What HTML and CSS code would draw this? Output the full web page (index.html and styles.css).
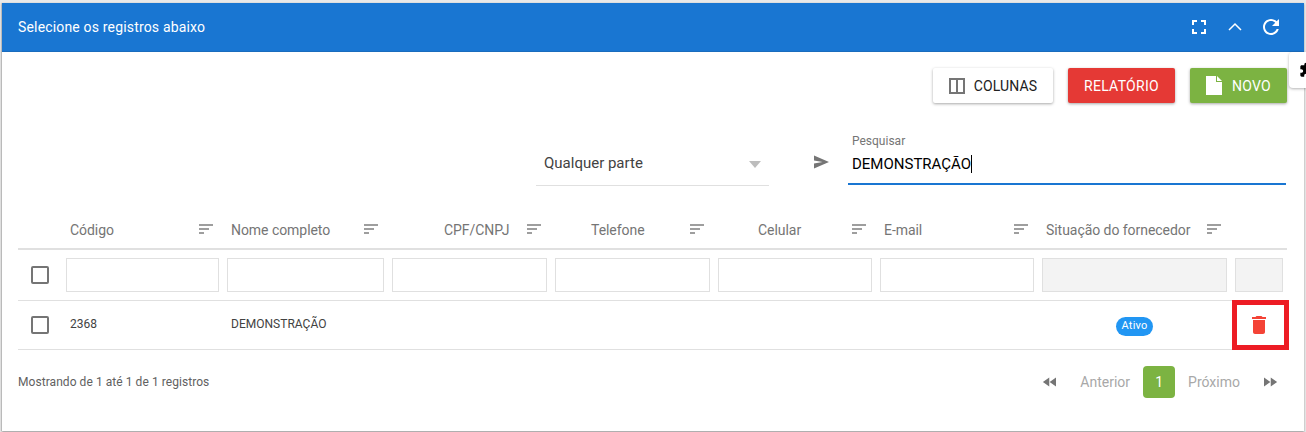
FILE: index.html
```html
<!DOCTYPE html>
<html lang="pt-BR">
<head>
<meta charset="utf-8">
<title>Selecione os registros</title>
<link rel="stylesheet" href="styles.css">
</head>
<body>
<main class="card">
  <header class="card-head">
    <h1 class="card-title">Selecione os registros abaixo</h1>
    <div class="head-tools">
      <svg class="tool tool-full" viewBox="0 0 24 24"><path d="M7 14H5v5h5v-2H7v-3zm-2-4h2V7h3V5H5v5zm12 7h-3v2h5v-5h-2v3zM14 5v2h3v3h2V5h-5z"/></svg>
      <svg class="tool tool-up" viewBox="0 0 24 24"><path d="M6 15l6-6 6 6" fill="none" stroke="#fff" stroke-width="1.5"/></svg>
      <svg class="tool tool-reload" viewBox="0 0 24 24"><path d="M17.65 6.35C16.2 4.9 14.21 4 12 4c-4.42 0-7.99 3.58-7.99 8s3.57 8 7.99 8c3.73 0 6.84-2.55 7.73-6h-2.08c-.82 2.33-3.04 4-5.65 4-3.31 0-6-2.69-6-6s2.69-6 6-6c1.66 0 3.14.69 4.22 1.78L13 11h7V4l-2.35 2.35z"/></svg>
    </div>
  </header>

  <div class="side-tab">
    <svg class="side-icon" viewBox="0 0 24 24"><path d="M20.5 11H19V7c0-1.1-.9-2-2-2h-4V3.5C13 2.12 11.88 1 10.5 1S8 2.12 8 3.5V5H4c-1.1 0-1.99.9-1.99 2v3.8H3.5c1.49 0 2.7 1.21 2.7 2.7s-1.21 2.7-2.7 2.7H2V20c0 1.1.9 2 2 2h3.8v-1.5c0-1.49 1.21-2.7 2.7-2.7 1.49 0 2.7 1.21 2.7 2.7V22H17c1.1 0 2-.9 2-2v-4h1.5c1.38 0 2.5-1.12 2.5-2.5S21.88 11 20.5 11z"/></svg>
  </div>

  <div class="card-body">
    <div class="actions">
      <button class="btn btn-light">
        <svg class="btn-columns" viewBox="0 0 16 16"><path d="M1 1h14v14H1zM8 1v14" fill="none" stroke="#757575" stroke-width="2"/></svg>
        COLUNAS
      </button>
      <button class="btn btn-red">RELATÓRIO</button>
      <button class="btn btn-green">
        <svg class="btn-file" viewBox="0 0 16 19"><path d="M0 0h10v6h6v13H0z"/><path d="M11 0l5 5h-5z"/></svg>
        NOVO
      </button>
    </div>

    <div class="search-row">
      <div class="select">
        <span>Qualquer parte</span>
        <span class="select-arrow"></span>
      </div>
      <svg class="send" viewBox="2 3 21 18"><path d="M2 21v-7l12-2-12-2V3l21 9z"/></svg>
      <div class="search">
        <span class="search-label">Pesquisar</span>
        <span class="search-value">DEMONSTRAÇÃO<i class="caret"></i></span>
      </div>
    </div>

    <table class="grid">
      <colgroup>
        <col class="w-check"><col class="w-a"><col class="w-b"><col class="w-c"><col class="w-c"><col class="w-d"><col class="w-d"><col class="w-e"><col class="w-f">
      </colgroup>
      <thead>
        <tr class="head-row">
          <th></th>
          <th><div class="th-in"><span class="th-label">Código</span><span class="sort"><i></i><i></i><i></i></span></div></th>
          <th><div class="th-in"><span class="th-label">Nome completo</span><span class="sort"><i></i><i></i><i></i></span></div></th>
          <th><div class="th-in"><span class="th-label p-cpf">CPF/CNPJ</span><span class="sort"><i></i><i></i><i></i></span></div></th>
          <th><div class="th-in"><span class="th-label p-tel">Telefone</span><span class="sort"><i></i><i></i><i></i></span></div></th>
          <th><div class="th-in"><span class="th-label p-cel">Celular</span><span class="sort"><i></i><i></i><i></i></span></div></th>
          <th><div class="th-in"><span class="th-label">E-mail</span><span class="sort"><i></i><i></i><i></i></span></div></th>
          <th><div class="th-in"><span class="th-label">Situação do fornecedor</span><span class="sort"><i></i><i></i><i></i></span></div></th>
          <th></th>
        </tr>
      </thead>
      <tbody>
        <tr class="filter-row">
          <td class="td-check"><span class="check"></span></td>
          <td><input class="filter" type="text"></td>
          <td><input class="filter" type="text"></td>
          <td><input class="filter" type="text"></td>
          <td><input class="filter" type="text"></td>
          <td><input class="filter" type="text"></td>
          <td><input class="filter" type="text"></td>
          <td><input class="filter filter-off" type="text" disabled></td>
          <td><input class="filter filter-off" type="text" disabled></td>
        </tr>
        <tr class="data-row">
          <td class="td-check"><span class="check"></span></td>
          <td class="cell">2368</td>
          <td class="cell">DEMONSTRAÇÃO</td>
          <td></td>
          <td></td>
          <td></td>
          <td></td>
          <td class="cell-center"><span class="badge">Ativo</span></td>
          <td class="cell-del">
            <svg class="trash" viewBox="0 0 24 24"><path d="M6 19c0 1.1.9 2 2 2h8c1.1 0 2-.9 2-2V7H6v12zM19 4h-3.5l-1-1h-5l-1 1H5v2h14V4z"/></svg>
            <span class="highlight"></span>
          </td>
        </tr>
      </tbody>
    </table>

    <footer class="foot">
      <span class="foot-info">Mostrando de 1 até 1 de 1 registros</span>
      <nav class="pager">
        <svg class="pg-icon" viewBox="0 0 24 24"><path d="M11 18V6l-8.5 6 8.5 6zm.5-6 8.5 6V6l-8.5 6z"/></svg>
        <span class="pg-text pg-prev">Anterior</span>
        <span class="pg-num">1</span>
        <span class="pg-text pg-next">Próximo</span>
        <svg class="pg-icon" viewBox="0 0 24 24"><path d="M4 18l8.5-6L4 6v12zm9-12v12l8.5-6L13 6z"/></svg>
      </nav>
    </footer>
  </div>
</main>
</body>
</html>
```
FILE: styles.css
```css
* { box-sizing: border-box; }
html, body { margin: 0; height: 100%; }
body {
  background: #e9e9e9;
  padding: 3px 2px 1px 2px;
  font-family: Roboto, "Liberation Sans", sans-serif;
  overflow: hidden;
}
.card {
  position: relative;
  height: 428px;
  background: #fff;
  box-shadow: 0 1px 2px rgba(0,0,0,.35), -1px 0 1px rgba(0,0,0,.1);
}
.card-head {
  height: 49px;
  background: #1976d2;
  border-bottom: 1px solid #1a6cbd;
  display: flex;
  align-items: center;
  justify-content: space-between;
  padding: 0 21px 0 16px;
}
.card-title {
  margin: 0;
  font-size: 14px;
  font-weight: 400;
  letter-spacing: .17px;
  color: #fff;
}
.head-tools { display: flex; align-items: center; }
.tool { width: 24px; height: 24px; fill: #fff; display: block; }
.tool-up { margin-left: 12px; }
.tool-reload { margin-left: 12px; }

.side-tab {
  position: absolute;
  top: 49px;
  right: -2px;
  width: 17px;
  height: 36px;
  background: #fff;
  border-radius: 4px 0 0 4px;
  box-shadow: 0 1px 3px rgba(0,0,0,.3);
  overflow: hidden;
}
.side-icon {
  position: absolute;
  left: 10px;
  top: 10px;
  width: 16px;
  height: 16px;
  fill: #000;
}

.card-body { padding: 16px 17px 0 16px; }
.actions { display: flex; justify-content: flex-end; gap: 15px; }
.btn {
  height: 35px;
  border: 0;
  border-radius: 2px;
  display: flex;
  align-items: center;
  justify-content: center;
  font-family: inherit;
  font-size: 14px;
  font-weight: 400;
  letter-spacing: .3px;
  box-shadow: 0 1px 3px rgba(0,0,0,.35);
  padding: 0;
}
.btn-light { width: 120px; background: #fff; color: #212121; gap: 9px; letter-spacing: .15px; }
.btn-red { width: 107px; background: #e53935; color: #fff; }
.btn-green { width: 97px; background: #7cb342; color: #fff; gap: 10px; }
.btn-columns { width: 16px; height: 16px; }
.btn-file { width: 16px; height: 19px; fill: #fff; }

.search-row {
  display: flex;
  align-items: flex-start;
  margin-top: 27px;
  padding-left: 518px;
}
.select {
  width: 233px;
  height: 54px;
  margin-top: 2px;
  padding: 22px 8px 0;
  border-bottom: 1px solid #e0e0e0;
  display: flex;
  justify-content: space-between;
  font-size: 15px;
  line-height: 18px;
  color: #424242;
}
.select-arrow {
  width: 0;
  height: 0;
  margin: 7px 0 0;
  border: 6px solid transparent;
  border-top: 7px solid #bdbdbd;
  border-bottom: 0;
}
.send { width: 15px; height: 14px; margin: 25px 0 0 45px; fill: #757575; flex: none; }
.search {
  width: 438px;
  height: 55px;
  margin-left: 19px;
  padding: 0 4px;
  border-bottom: 2px solid #1976d2;
  display: flex;
  flex-direction: column;
}
.search-label { font-size: 12px; color: #757575; line-height: 14px; margin-top: 4px; }
.search-value {
  font-size: 15px;
  line-height: 20px;
  margin-top: 6px;
  color: #000;
}
.caret {
  display: inline-block;
  width: 1px;
  height: 18px;
  background: #000;
  vertical-align: -4px;
}

.grid {
  width: 1269px;
  margin-top: 27px;
  border-collapse: collapse;
  table-layout: fixed;
}
.w-check { width: 44px; }
.w-a { width: 161px; }
.w-b { width: 165px; }
.w-c { width: 163px; }
.w-d { width: 162px; }
.w-e { width: 193px; }
.w-f { width: 56px; }
.head-row { height: 36px; border-bottom: 2px solid #e0e0e0; }
th { padding: 0 10px 3px 8px; font-weight: 400; text-align: left; }
.th-in { display: flex; align-items: center; justify-content: space-between; }
.th-label { padding-top: 2px; font-size: 14px; color: #757575; white-space: nowrap; letter-spacing: -.05px; }
.p-cpf { padding-left: 48px; }
.p-tel { padding-left: 32px; }
.p-cel { padding-left: 36px; }
.sort { display: flex; flex-direction: column; gap: 2px; width: 14px; flex: none; }
.sort i { display: block; height: 2px; background: #9e9e9e; }
.sort i:nth-child(1) { width: 14px; }
.sort i:nth-child(2) { width: 10px; }
.sort i:nth-child(3) { width: 5px; }

.filter-row { height: 51px; border-bottom: 1px solid #e0e0e0; }
.data-row { height: 49px; border-bottom: 1px solid #e0e0e0; }
td { padding: 0 4px; vertical-align: middle; }
.td-check { padding: 0; text-align: center; }
.check {
  display: block;
  width: 18px;
  height: 18px;
  margin: 0 auto;
  border: 2px solid #757575;
  border-radius: 2px;
}
.filter {
  display: block;
  width: 100%;
  height: 34px;
  padding: 0 6px;
  background: #fff;
  border: 1px solid #e0e0e0;
  outline: 0;
  border-radius: 0;
}
.filter-off { background: #f3f3f3; }
.cell { padding: 0 4px 2px 8px; font-size: 12px; color: #424242; letter-spacing: .02px; }
.cell-center { text-align: center; }
.badge {
  display: inline-block;
  height: 19px;
  padding: 0 6px;
  line-height: 18px;
  border-radius: 10px;
  background: #2196f3;
  color: #fff;
  font-size: 11px;
  letter-spacing: .2px;
}
.cell-del { position: relative; padding: 0; }
.trash { display: block; width: 24px; height: 24px; margin: 0 auto; fill: #f44336; }
.highlight {
  position: absolute;
  left: 1px;
  top: -1px;
  width: 57px;
  height: 50px;
  border: 5px solid #ed1c24;
}

.foot {
  display: flex;
  align-items: center;
  justify-content: space-between;
  margin-top: 16px;
  height: 32px;
}
.foot-info { font-size: 12px; color: #616161; letter-spacing: .06px; }
.pager { display: flex; align-items: center; padding-right: 8px; }
.pg-icon { width: 18px; height: 18px; fill: #757575; display: block; }
.pg-text { font-size: 14px; color: #a8a8a8; }
.pg-prev { margin: 0 13px 0 21px; }
.pg-next { margin: 0 21px 0 13px; }
.pg-num {
  width: 32px;
  height: 32px;
  border-radius: 4px;
  background: #7cb342;
  color: #fff;
  font-size: 14px;
  display: flex;
  align-items: center;
  justify-content: center;
}
```
